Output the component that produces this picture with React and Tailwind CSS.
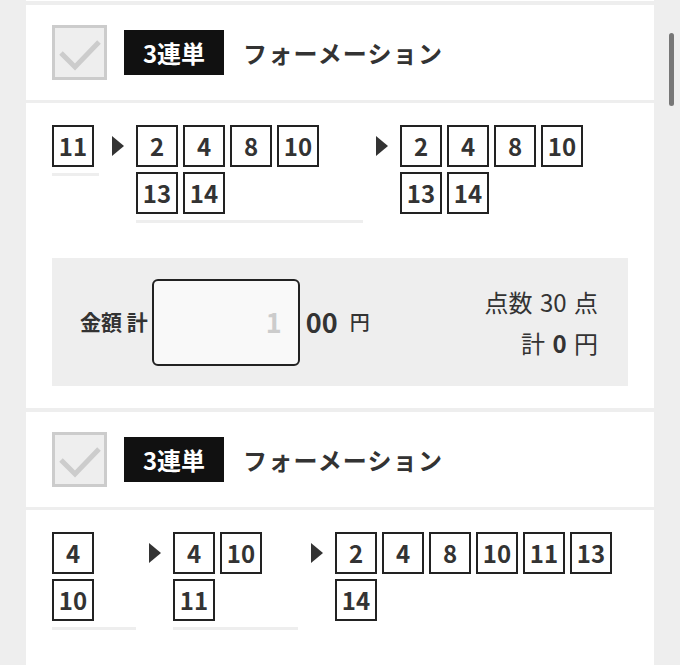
import React from 'react';

const cards = [
    {
        cols: [
            { width: 'w-[47px]', nums: [11], line: true },
            { width: 'w-[227px]', nums: [2, 4, 8, 10, 13, 14], line: true },
            { width: 'flex-1', nums: [2, 4, 8, 10, 13, 14], line: false },
        ],
        points: 30,
    },
    {
        cols: [
            { width: 'w-[84px]', nums: [4, 10], line: true },
            { width: 'w-[125px]', nums: [4, 10, 11], line: true },
            { width: 'flex-1', nums: [2, 4, 8, 10, 11, 13, 14], line: false },
        ],
        points: 12,
    },
];

function CheckBox() {
    return (
        <div className="w-[55px] h-[55px] border-[3px] border-[#cccccc] bg-[#eeeeee] shrink-0">
            <svg width="49" height="49" viewBox="0 0 49 49">
                <path d="M6 25 L20 39 L44 14" fill="none" stroke="#cccccc" strokeWidth="5" />
            </svg>
        </div>
    );
}

function Arrow() {
    return (
        <div className="w-[37px] shrink-0 flex justify-center pt-[11px]">
            <svg width="12" height="20" viewBox="0 0 12 20">
                <path d="M0 0 L12 10 L0 20 Z" fill="#333333" />
            </svg>
        </div>
    );
}

function Column({ col }) {
    return (
        <div className={`${col.width} shrink-0 flex flex-col`}>
            <div className="flex flex-wrap gap-[5px]">
                {col.nums.map((n, i) => (
                    <div
                        key={i}
                        className="w-[42px] h-[42px] border-2 border-[#222222] bg-white flex items-center justify-center text-[24px] font-bold text-[#333333] leading-none"
                    >
                        {n}
                    </div>
                ))}
            </div>
            {col.line && <div className="mt-[6px] h-[3px] bg-[#eeeeee]" />}
        </div>
    );
}

function Card({ card }) {
    return (
        <div className="bg-white">
            {/* Header */}
            <div className="h-[98px] flex items-center pl-[26px] border-b-[3px] border-[#eeeeee]">
                <CheckBox />
                <div className="ml-[17px] w-[100px] h-[45px] bg-[#111111] text-white text-[24px] font-bold flex items-center justify-center">
                    3連単
                </div>
                <div className="ml-[19px] text-[24px] font-bold text-[#333333] tracking-[0.05em]">
                    フォーメーション
                </div>
            </div>

            {/* Content */}
            <div className="px-[26px] pt-[22px] pb-[22px]">
                <div className="flex items-start">
                    <Column col={card.cols[0]} />
                    <Arrow />
                    <Column col={card.cols[1]} />
                    <Arrow />
                    <Column col={card.cols[2]} />
                </div>

                {/* Amount panel */}
                <div className="mt-[35px] h-[128px] bg-[#eeeeee] flex items-center justify-between pl-[28px] pr-[30px]">
                    <div className="flex items-center">
                        <span className="text-[21px] font-bold text-[#333333]">金額 計</span>
                        <div className="ml-[4px] w-[148px] h-[87px] border-2 border-[#222222] rounded-[6px] bg-[#f9f9f9] flex items-center justify-end pr-[16px] text-[27px] font-bold text-[#cccccc]">
                            1
                        </div>
                        <span className="ml-[6px] text-[27px] font-bold text-[#333333]">00</span>
                        <span className="ml-[12px] text-[20px] font-medium text-[#333333]">円</span>
                    </div>
                    <div className="flex flex-col items-end text-[24px] text-[#333333] leading-[41px] [word-spacing:2px]">
                        <span>点数 {card.points} 点</span>
                        <span>
                            計 <b className="font-bold">0</b> 円
                        </span>
                    </div>
                </div>
            </div>
        </div>
    );
}

export default function App() {
    return (
        <div
            className="relative w-[680px] h-[665px] overflow-hidden bg-[#eeeeee]"
            style={{ fontFamily: '"Noto Sans CJK JP", "Noto Sans", sans-serif' }}
        >
            <div className="flex flex-col gap-[4px] px-[26px]">
                <div className="h-[1px] bg-white" />
                <Card card={cards[0]} />
                <Card card={cards[1]} />
            </div>

            {/* Scrollbar */}
            <div className="absolute left-[669px] top-[33px] w-[5px] h-[73px] rounded-full bg-[#777777]" />
        </div>
    );
}
